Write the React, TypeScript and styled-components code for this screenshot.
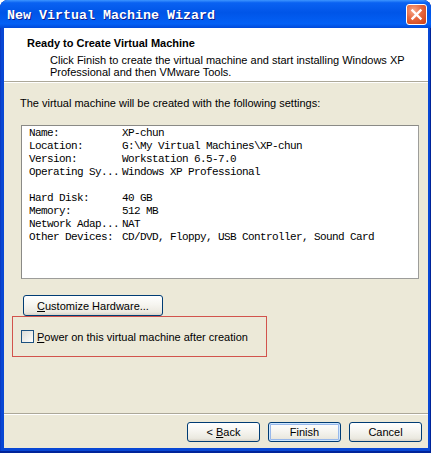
import React from "react";
import styled, { createGlobalStyle } from "styled-components";

const GlobalStyle = createGlobalStyle`
  html, body {
    margin: 0;
    padding: 0;
    background: #ffffff;
  }
  body {
    font-family: "Liberation Sans", Arial, sans-serif;
    font-size: 11px;
    color: #000;
  }
`;

const settings = [
  ["Name:", "XP-chun"],
  ["Location:", "G:\\My Virtual Machines\\XP-chun"],
  ["Version:", "Workstation 6.5-7.0"],
  ["Operating Sy...", "Windows XP Professional"],
  null,
  ["Hard Disk:", "40 GB"],
  ["Memory:", "512 MB"],
  ["Network Adap...", "NAT"],
  ["Other Devices:", "CD/DVD, Floppy, USB Controller, Sound Card"],
];

const App = () => {
  return (
    <>
      <GlobalStyle />
      <Window>
        <TitleBar>
          <Title>New Virtual Machine Wizard</Title>
          <CloseButton>
            <svg width="13" height="13" viewBox="0 0 13 13">
              <path
                d="M2.5 2.5 L10.5 10.5 M10.5 2.5 L2.5 10.5"
                stroke="#ffffff"
                strokeWidth="2.4"
                strokeLinecap="square"
              />
            </svg>
          </CloseButton>
        </TitleBar>
        <Panel>
          <Header>
            <HeaderTitle>Ready to Create Virtual Machine</HeaderTitle>
            <HeaderText>
              Click Finish to create the virtual machine and start installing
              Windows XP
              <br />
              Professional and then VMware Tools.
            </HeaderText>
          </Header>
          <Body>
            <Intro>
              The virtual machine will be created with the following settings:
            </Intro>
            <SettingsBox>
              {settings.map((row, index) =>
                row ? (
                  <SettingRow key={index}>
                    <span>{row[0]}</span>
                    <span>{row[1]}</span>
                  </SettingRow>
                ) : (
                  <BlankRow key={index} />
                )
              )}
            </SettingsBox>
            <CustomizeButton>
              <u>C</u>ustomize Hardware...
            </CustomizeButton>
            <PowerBox>
              <CheckBox />
              <CheckLabel>
                <u>P</u>ower on this virtual machine after creation
              </CheckLabel>
            </PowerBox>
          </Body>
          <Footer>
            <WizardButton>
              {"< "}
              <u>B</u>ack
            </WizardButton>
            <WizardButton $isDefault>Finish</WizardButton>
            <WizardButton>Cancel</WizardButton>
          </Footer>
        </Panel>
      </Window>
    </>
  );
};

const Window = styled.div`
  width: 431px;
  height: 453px;
  box-sizing: border-box;
  display: flex;
  flex-direction: column;
  padding: 0 3px 5px 4px;
  background: #0847d4;
  border-radius: 8px 8px 0 0;
  box-shadow: inset 0 -2px 0 #00249a, inset -1px 0 0 #00249a,
    inset 1px 0 0 #0a3bc4;
`;

const TitleBar = styled.div`
  height: 28px;
  flex-shrink: 0;
  margin: 0 -3px 0 -4px;
  padding: 0 4px 0 7px;
  display: flex;
  align-items: center;
  justify-content: space-between;
  border-radius: 8px 8px 0 0;
  background: linear-gradient(
    to bottom,
    #3d95ff 0%,
    #0a62f2 10%,
    #0055e8 45%,
    #0360f5 85%,
    #0049da 100%
  );
`;

const Title = styled.span`
  font-family: "Liberation Mono", "Courier New", monospace;
  font-weight: bold;
  font-size: 13.33px;
  color: #ffffff;
  text-shadow: 1px 1px 0 #0b1d8f;
  margin-top: 2px;
`;

const CloseButton = styled.div`
  width: 21px;
  height: 21px;
  box-sizing: border-box;
  border: 1px solid #ffffff;
  border-radius: 3px;
  display: flex;
  align-items: center;
  justify-content: center;
  background: radial-gradient(
    circle at 35% 30%,
    #f7a98a 0%,
    #e6683f 45%,
    #cc3d12 100%
  );
`;

const Panel = styled.div`
  flex: 1;
  display: flex;
  flex-direction: column;
  background: #ece9d8;
`;

const Header = styled.div`
  height: 54px;
  box-sizing: border-box;
  padding: 9px 0 0 23px;
  background: #ffffff;
  border-bottom: 1px solid #aca899;
`;

const HeaderTitle = styled.div`
  font-weight: bold;
  line-height: 13px;
`;

const HeaderText = styled.div`
  margin-top: 4px;
  padding-left: 23px;
  line-height: 12px;
`;

const Body = styled.div`
  flex: 1;
  display: flex;
  flex-direction: column;
  align-items: flex-start;
  padding: 14px 0 0 8px;
  border-top: 1px solid #ffffff;
`;

const Intro = styled.div`
  margin-left: 8px;
  line-height: 13px;
`;

const SettingsBox = styled.div`
  width: 398px;
  height: 154px;
  box-sizing: border-box;
  margin: 15px 0 0 9px;
  padding: 1px 7px;
  background: #ffffff;
  border: 1px solid #9d9d9a;
  border-top-color: #8a8a86;
  border-left-color: #8a8a86;
  font-family: "Liberation Mono", "Courier New", monospace;
  font-size: 11px;
  letter-spacing: -0.6px;
  line-height: 13px;
`;

const SettingRow = styled.div`
  display: grid;
  grid-template-columns: 93px 1fr;
  white-space: nowrap;
`;

const BlankRow = styled.div`
  height: 13px;
`;

const buttonFace = `
  box-sizing: border-box;
  border: 1px solid #003c74;
  border-radius: 3px;
  background: linear-gradient(
    to bottom,
    #ffffff 0%,
    #f6f5f0 45%,
    #ebe9e0 85%,
    #d8d3c8 100%
  );
  font-family: "Liberation Sans", Arial, sans-serif;
  font-size: 11px;
  color: #000;
  display: flex;
  align-items: center;
  justify-content: center;
  white-space: pre;
`;

const CustomizeButton = styled.div`
  ${buttonFace}
  width: 140px;
  height: 21px;
  margin: 16px 0 0 11px;
`;

const PowerBox = styled.div`
  width: 255px;
  height: 41px;
  box-sizing: border-box;
  border: 1px solid #d2534c;
  padding-left: 8px;
  display: flex;
  align-items: center;
`;

const CheckBox = styled.div`
  width: 13px;
  height: 13px;
  box-sizing: border-box;
  border: 1px solid #1c5180;
  background: linear-gradient(135deg, #dcdcd7 0%, #f4f4f1 70%, #ffffff 100%);
`;

const CheckLabel = styled.span`
  margin-left: 3px;
`;

const Footer = styled.div`
  height: 35px;
  box-sizing: border-box;
  flex-shrink: 0;
  border-top: 1px solid #aca899;
  box-shadow: inset 0 1px 0 #ffffff;
  padding: 8px 6px 0 0;
  display: flex;
  justify-content: flex-end;
  align-items: flex-start;
  gap: 8px;
`;

const WizardButton = styled.div<{ $isDefault?: boolean }>`
  ${buttonFace}
  width: 73px;
  height: 20px;
  box-shadow: ${({ $isDefault }) =>
    $isDefault
      ? "inset 0 0 0 1px #cee7ff, inset 0 0 0 2px #98b8ea"
      : "none"};
`;

export default App;
